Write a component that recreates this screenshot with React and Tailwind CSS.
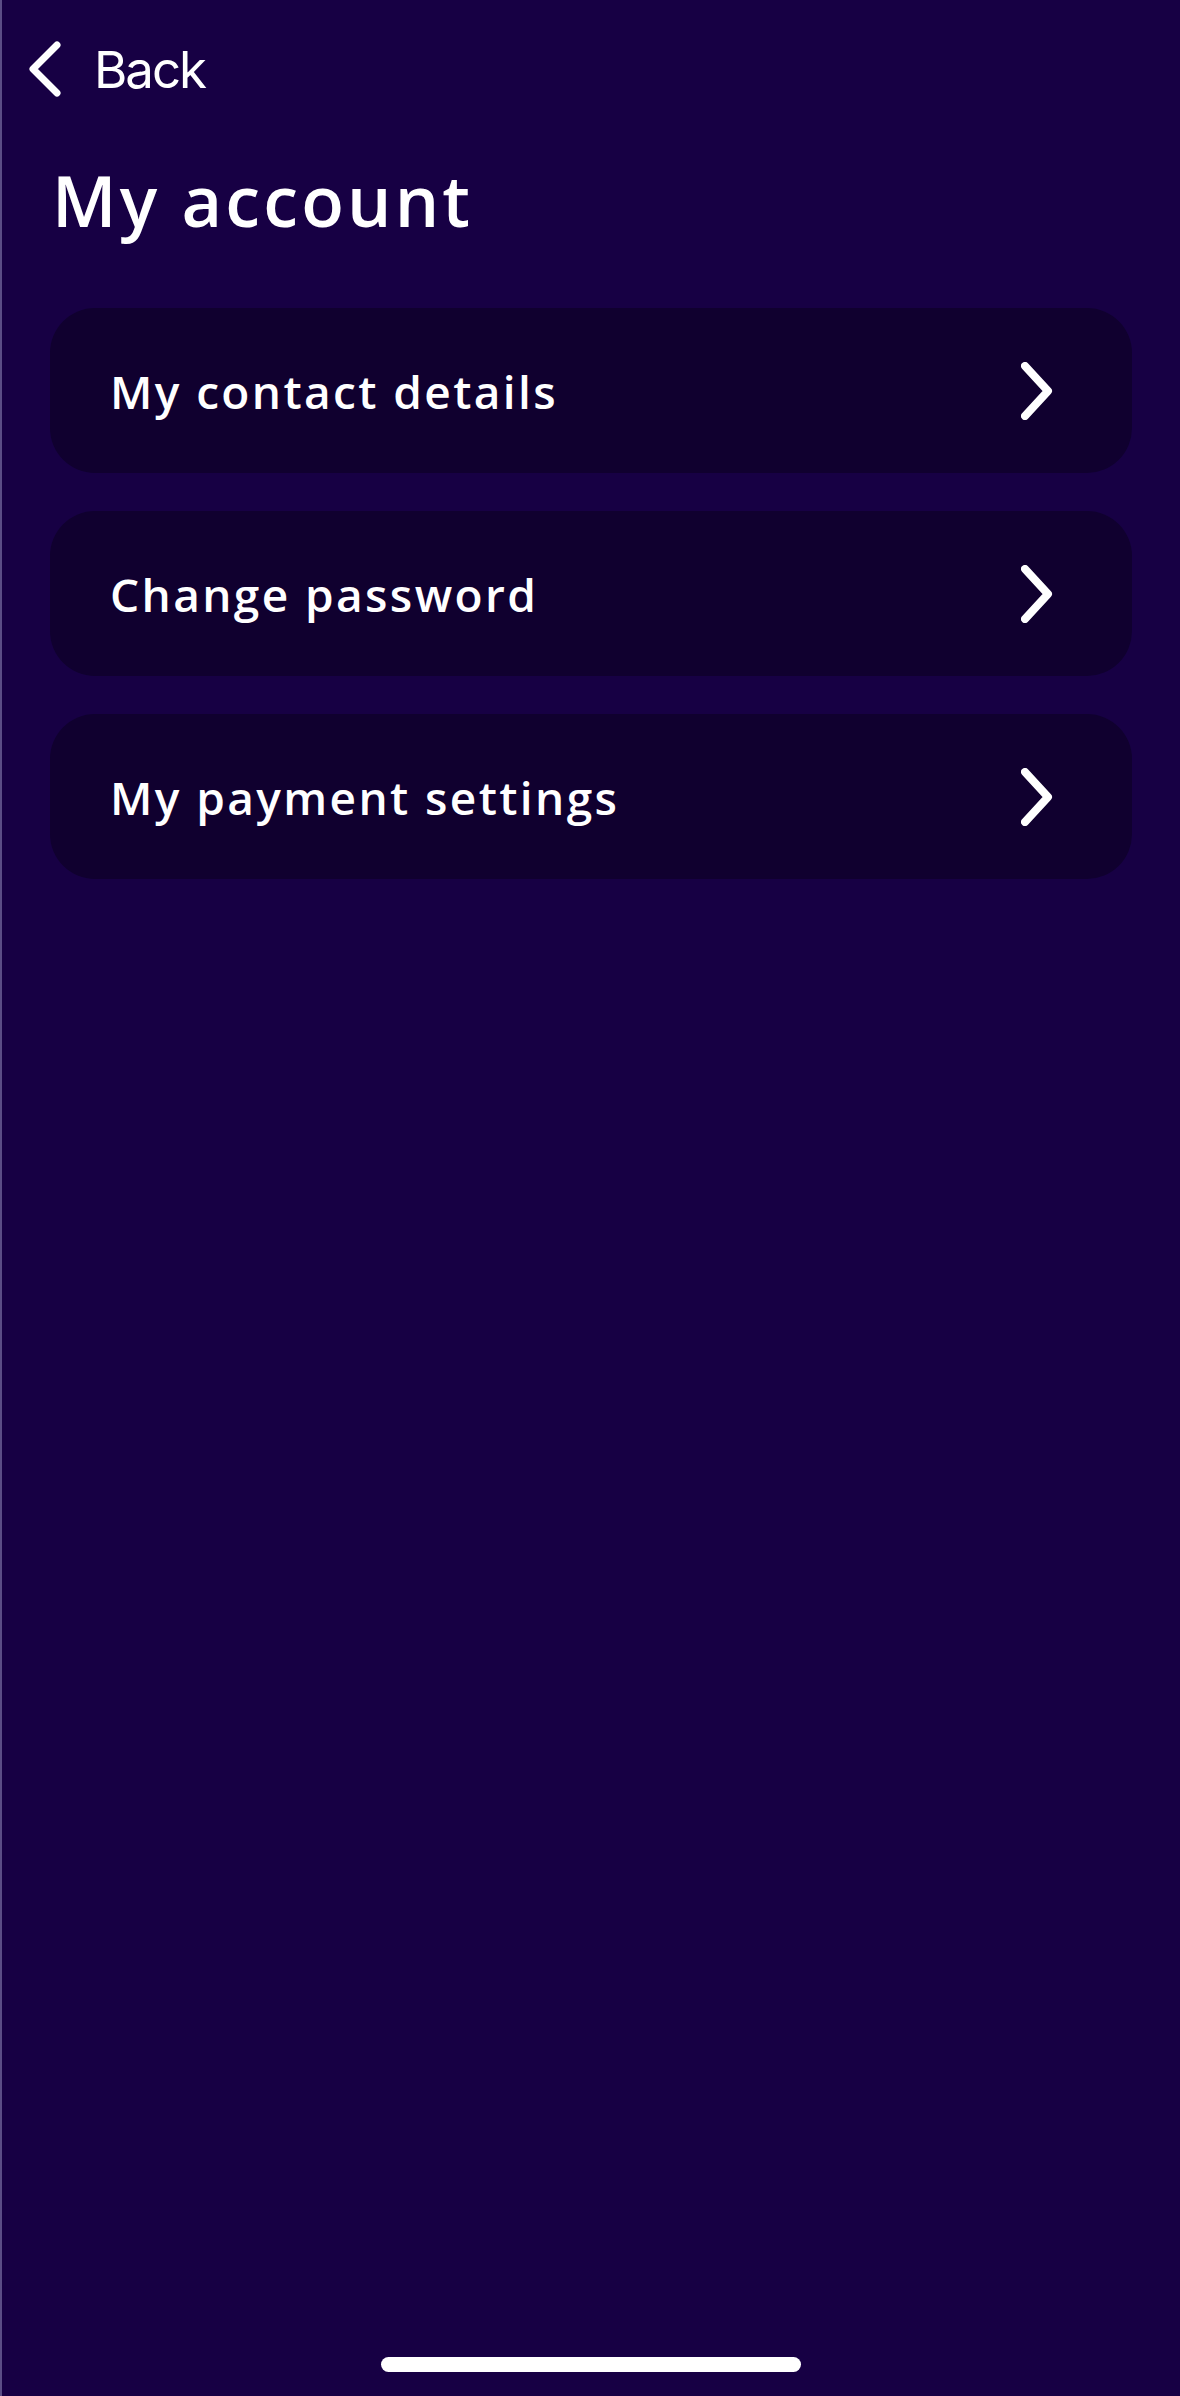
const ITEMS = ["My contact details", "Change password", "My payment settings"];

function ChevronLeft() {
  return (
    <svg width="34" height="56" viewBox="0 0 34 56" fill="none">
      <path d="M29 4 L5 28 L29 52" stroke="white" strokeWidth="7" strokeLinecap="round" strokeLinejoin="round" />
    </svg>
  );
}

function ChevronRight() {
  return (
    <svg width="32" height="58" viewBox="0 0 32 58" fill="none">
      <path d="M4 4 L27 29 L4 54" stroke="white" strokeWidth="8" strokeLinecap="round" strokeLinejoin="round" />
    </svg>
  );
}

function MenuItem({ label }) {
  return (
    <button className="flex h-[165px] w-full items-center justify-between rounded-[45px] bg-[#10002f] pl-[60px] pr-[79px] text-left">
      <span className="text-[46px] font-semibold leading-none tracking-[0.052em] text-white" style={{ fontFamily: "'Open Sans', sans-serif" }}>
        {label}
      </span>
      <ChevronRight />
    </button>
  );
}

export default function App() {
  return (
    <div className="flex min-h-[2396px] flex-col border-l-2 border-[#5b4d86] bg-[#170044]">
      {/* header */}
      <div className="flex items-center gap-[32px] pl-[26px] pt-[41px]">
        <ChevronLeft />
        <span className="text-[51px] leading-none tracking-[-0.04em] text-white" style={{ fontFamily: "Inter, sans-serif" }}>
          Back
        </span>
      </div>

      <h1 className="ml-[50px] mt-[68px] text-[70px] font-semibold leading-none tracking-[0.045em] text-white" style={{ fontFamily: "'Open Sans', sans-serif" }}>
        My account
      </h1>

      <div className="mx-[48px] mt-[73px] flex flex-col gap-[38px]">
        {ITEMS.map((label) => (
          <MenuItem key={label} label={label} />
        ))}
      </div>

      <div className="mt-auto flex justify-center pb-[24px]">
        <div className="h-[15px] w-[420px] rounded-full bg-white" />
      </div>
    </div>
  );
}
